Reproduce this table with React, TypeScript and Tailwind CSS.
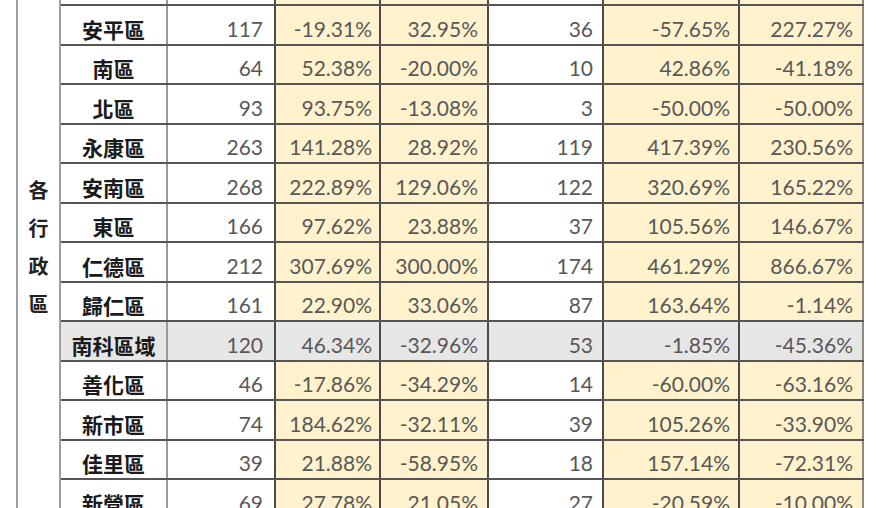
import React from "react";

type Row = { name: string; v: (string)[]; gray?: boolean };

const rows: Row[] = [
  { name: "", v: ["", "", "", "", "", ""] },
  { name: "安平區", v: ["117", "-19.31%", "32.95%", "36", "-57.65%", "227.27%"] },
  { name: "南區", v: ["64", "52.38%", "-20.00%", "10", "42.86%", "-41.18%"] },
  { name: "北區", v: ["93", "93.75%", "-13.08%", "3", "-50.00%", "-50.00%"] },
  { name: "永康區", v: ["263", "141.28%", "28.92%", "119", "417.39%", "230.56%"] },
  { name: "安南區", v: ["268", "222.89%", "129.06%", "122", "320.69%", "165.22%"] },
  { name: "東區", v: ["166", "97.62%", "23.88%", "37", "105.56%", "146.67%"] },
  { name: "仁德區", v: ["212", "307.69%", "300.00%", "174", "461.29%", "866.67%"] },
  { name: "歸仁區", v: ["161", "22.90%", "33.06%", "87", "163.64%", "-1.14%"] },
  { name: "南科區域", v: ["120", "46.34%", "-32.96%", "53", "-1.85%", "-45.36%"], gray: true },
  { name: "善化區", v: ["46", "-17.86%", "-34.29%", "14", "-60.00%", "-63.16%"] },
  { name: "新市區", v: ["74", "184.62%", "-32.11%", "39", "105.26%", "-33.90%"] },
  { name: "佳里區", v: ["39", "21.88%", "-58.95%", "18", "157.14%", "-72.31%"] },
  { name: "新營區", v: ["69", "27.78%", "21.05%", "27", "-20.59%", "-10.00%"] },
  { name: "", v: ["", "", "", "", "", ""] },
];

const numFont = { fontFamily: '"Lato", "Noto Sans CJK TC", sans-serif' };

function Cell({
  w,
  text,
  bg,
  border,
  pr,
}: {
  w: string;
  text: string;
  bg: string;
  border: string;
  pr: string;
}) {
  return (
    <div
      className={`${w} ${bg} ${border} ${pr} h-full flex items-end justify-end pb-[4px] text-[21px] leading-[22px] text-[#585858]`}
      style={numFont}
    >
      {text}
    </div>
  );
}

export default function App() {
  return (
    <div className="w-[891px] h-[508px] overflow-hidden bg-white">
      <div className="flex -mt-[33.5px] ml-[16px]">
        <div className="w-[45px] shrink-0 border-l-2 border-r-2 border-[#a0a0a0] flex flex-col items-center pt-[204px]">
          {["各", "行", "政", "區"].map((c) => (
            <div
              key={c}
              className="text-[20px] leading-[38px] font-bold text-[#222222]"
              style={{ fontFamily: '"Noto Sans CJK TC", sans-serif' }}
            >
              {c}
            </div>
          ))}
        </div>
        <div className="flex flex-col">
          {rows.map((r, i) => {
            const yel = r.gray ? "bg-[#e6e6e6]" : "bg-[#fff2cc]";
            const wh = r.gray ? "bg-[#e6e6e6]" : "bg-white";
            return (
              <div
                key={i}
                className="flex h-[39.5px] border-b-2 border-[#555555]"
              >
                <div
                  className={`w-[107px] h-full ${wh} border-r-2 border-[#9a9a9a] flex items-end justify-center pb-[4px] text-[21px] leading-[22px] font-bold text-[#1a1a1a]`}
                  style={{ fontFamily: '"Noto Sans CJK TC", sans-serif' }}
                >
                  {r.name}
                </div>
                <Cell w="w-[108px]" text={r.v[0]} bg={wh} border="border-r-2 border-[#4a4a4a]" pr="pr-[11px]" />
                <Cell w="w-[105px]" text={r.v[1]} bg={yel} border="border-r-2 border-[#4a4a4a]" pr="pr-[7px]" />
                <Cell w="w-[108px]" text={r.v[2]} bg={yel} border="border-r-2 border-[#4a4a4a]" pr="pr-[9px]" />
                <Cell w="w-[115px]" text={r.v[3]} bg={wh} border="border-r-2 border-[#4a4a4a]" pr="pr-[9px]" />
                <Cell w="w-[136px]" text={r.v[4]} bg={yel} border="border-r-2 border-[#4a4a4a]" pr="pr-[8px]" />
                <Cell w="w-[124px]" text={r.v[5]} bg={yel} border="border-r-2 border-[#8f8a7e]" pr="pr-[9px]" />
              </div>
            );
          })}
        </div>
      </div>
    </div>
  );
}
